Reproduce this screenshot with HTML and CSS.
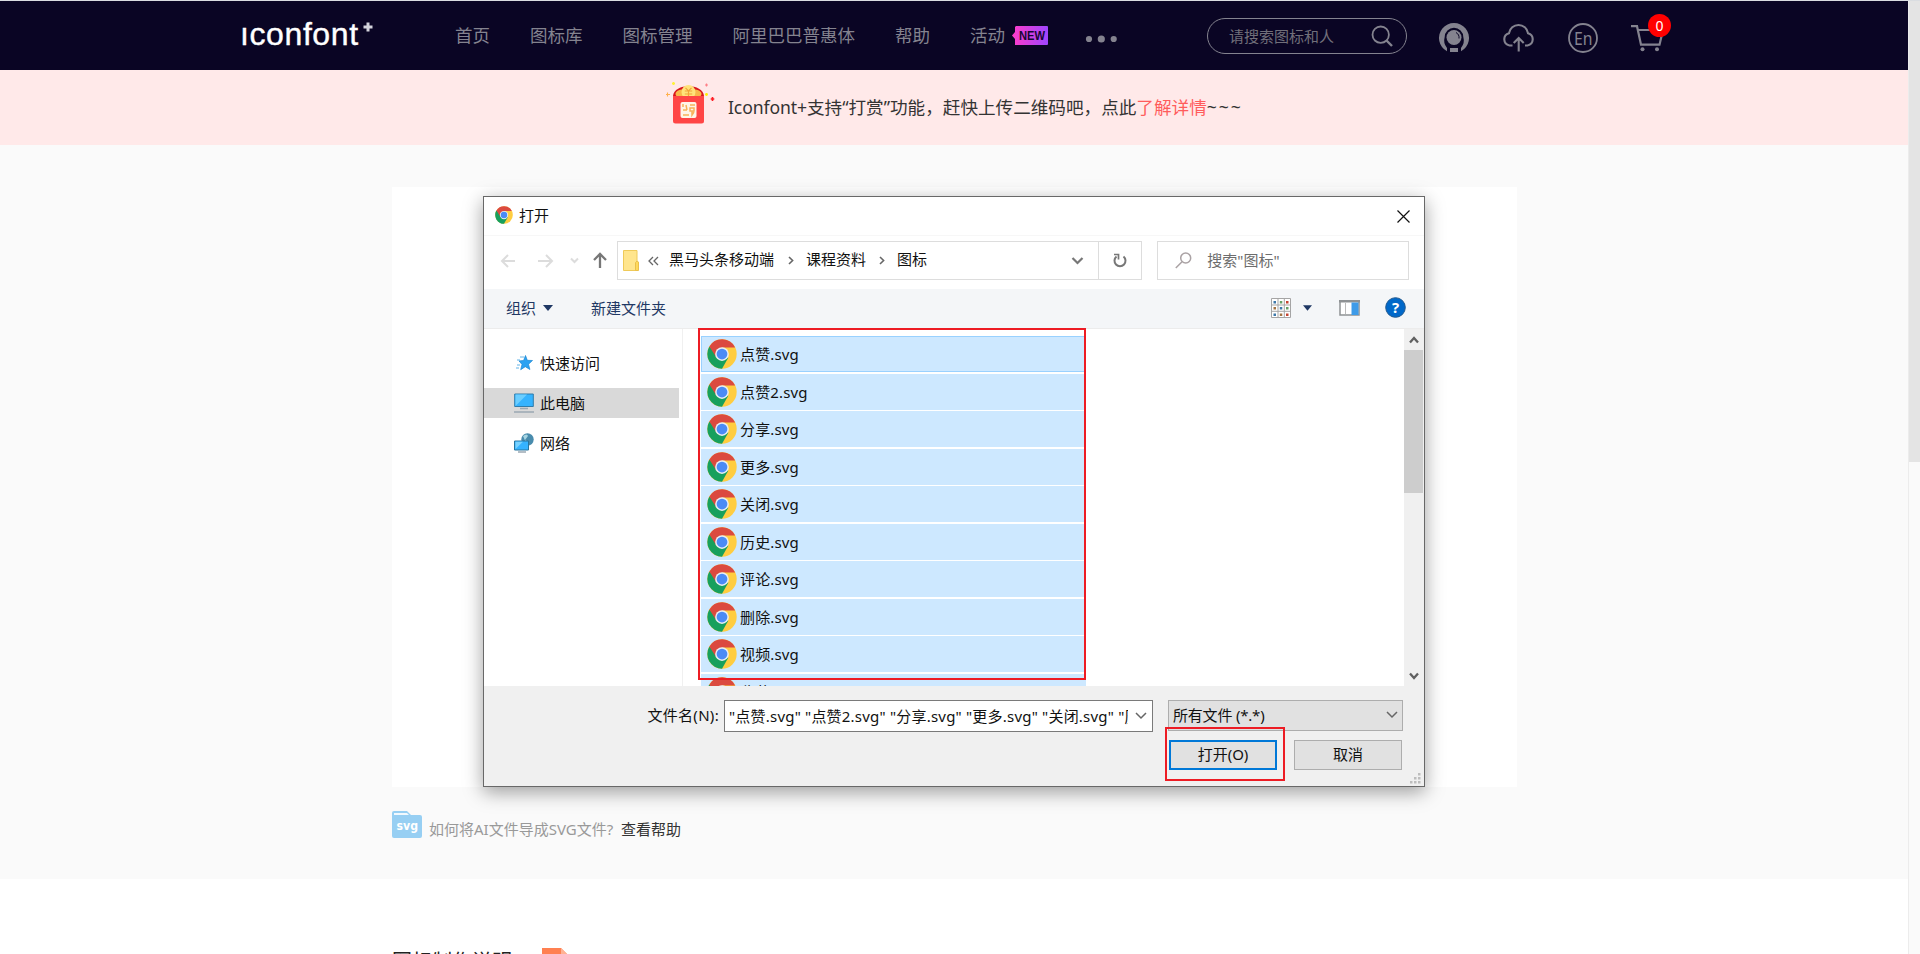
FILE: index.html
```html
<!DOCTYPE html>
<html lang="zh-CN">
<head>
<meta charset="utf-8">
<title>Iconfont+</title>
<link rel="stylesheet" href="styles.css">
</head>
<body>
<svg class="defs" aria-hidden="true">
  <symbol id="chrome" viewBox="0 0 48 48">
    <circle cx="24" cy="24" r="23.5" fill="#ffcd40"/>
    <path d="M24 24 L3.6 12.3 A23.5 23.5 0 0 0 24 47.5 L34 30z" fill="#17a05d"/>
    <path d="M24 13.5 H45 A23.5 23.5 0 0 0 3.8 12 L15 29.5z" fill="#db4a3f"/>
    <circle cx="24" cy="24" r="11" fill="#eaeef2"/>
    <circle cx="24" cy="24" r="8.6" fill="#4b8bf5"/>
  </symbol>
</svg>
<div class="page">
  <div class="main">
    <header class="header">
      <div class="logo"><span class="logo-text">ıconfont</span><svg width="10" height="10" viewBox="0 0 10 10"><path d="M5 .5v9M.5 5h9" stroke="#d4d4dc" stroke-width="3"/></svg></div>
      <nav class="nav">
        <a>首页</a><a>图标库</a><a>图标管理</a><a>阿里巴巴普惠体</a><a>帮助</a>
        <a class="activity">活动<svg width="36" height="19" viewBox="0 0 36 19"><defs><linearGradient id="ng"><stop stop-color="#ff3cc8"/><stop offset="1" stop-color="#9f45ff"/></linearGradient></defs><path d="M4 0H35a1 1 0 0 1 1 1V18a1 1 0 0 1-1 1H3V13L0 9.5 3 6V1z" fill="url(#ng)"/><text class="new-text" x="7" y="14" textLength="26" lengthAdjust="spacingAndGlyphs">NEW</text></svg></a>
        <svg class="dots" width="32" height="8" viewBox="0 0 32 8"><g fill="#84838f"><circle cx="4" cy="4" r="3.1"/><circle cx="16.3" cy="4" r="3.6"/><circle cx="28.7" cy="4" r="3.1"/></g></svg>
      </nav>
      <div class="search"><span>请搜索图标和人</span><svg width="22" height="22" viewBox="0 0 22 22" fill="none" stroke="#84838f" stroke-width="1.8"><circle cx="9.7" cy="9.7" r="8.2"/><path d="M15.5 15.5L21 21" stroke-width="2.4"/></svg></div>
      <div class="tools">
        <svg width="30" height="31" viewBox="0 0 30 31"><path d="M8 29.2V26A12 12 0 0 1 5.7 15a9.3 9.3 0 0 1 18.6 0A12 12 0 0 1 22 26v3.2A15 15 0 1 0 8 29.2z" fill="#84838f"/><path d="M6 17A9 10 0 0 1 24 17Q23 22 20 24H10Q7 22 6 17z" fill="#0a0524"/><circle cx="15" cy="15.500" r="7.500" fill="#84838f"/><path d="M11 26h8v4h-8z" fill="#84838f"/><path d="M17 10.500a6 6 0 0 1 3 6" fill="none" stroke="#0a0524"/></svg>
        <svg width="33" height="28" viewBox="0 0 33 28" fill="none" stroke="#84838f" stroke-width="2.1"><path d="M10.5 21.5H7.5A6.3 6.3 0 0 1 7 9.2 9.6 9.6 0 0 1 26 9.2 6.3 6.3 0 0 1 25.5 21.5H23"/><path d="M16.7 27.5V14.5M11.7 19l5-5 5 5"/></svg>
        <svg width="30" height="30" viewBox="0 0 30 30"><circle cx="15" cy="15" r="14" fill="none" stroke="#84838f" stroke-width="1.8"/><text class="en-text" x="6" y="21.500" textLength="18.500" lengthAdjust="spacingAndGlyphs">En</text></svg>
        <div class="cart"><svg width="33" height="28" viewBox="0 0 33 28" fill="none" stroke="#84838f" stroke-width="2.2"><path d="M0 2.2h6l4 18.5h18.5L32 6H7"/><g fill="#84838f" stroke="none"><circle cx="11.5" cy="25.3" r="2"/><circle cx="26" cy="25.3" r="2"/></g></svg><span class="badge">0</span></div>
      </div>
    </header>
    <div class="notice">
      <svg width="50" height="44" viewBox="0 0 50 44"><path d="M7 14C8 1 37 1 38 14z" fill="#d9151c"/><ellipse cx="22.5" cy="12" rx="13" ry="5.5" fill="#f8b84b"/><circle cx="22.5" cy="10" r="7" fill="#ffe37a"/><path d="M19.5 5.8l3 3 3-3M18.8 9h7.4M18.8 12h7.4M22.5 9v6" stroke="#f2a53a" stroke-width="1.2" fill="none"/><path d="M7 14H38V39a2.500 2.500 0 0 1-2.500 2.500h-26A2.500 2.500 0 0 1 7 39z" fill="#ff4545"/><rect x="14.500" y="20" width="16" height="16" rx="2" fill="#fff5e8"/><path d="M17 22v3M20 23l1 5M17 28h4M17 33h6M24 23h5M24 26h4v3h-4zM26 29v4l2-3" stroke="#f8b25a" stroke-width="1.500" fill="none"/><path d="M7.500 0v3M6 1.500h3" stroke="#fff23a" stroke-width="1.600"/><path d="M1.500 10.500v4M0 12.500h4" stroke="#ffb14d" stroke-width="1.100"/><path d="M40.500 1.500v3M39 3h3" stroke="#ff7f87" stroke-width="1.200"/><circle cx="40.500" cy="12.500" r="1.400" fill="#ffed00"/><path d="M46.500 15v4M44.700 17h3.600" stroke="#ff1c24" stroke-width="1.600"/></svg>
      <p><span class="lat">Iconfont+</span>支持“打赏”功能，赶快上传二维码吧，点此<a>了解详情</a><span class="tilde">~~~</span></p>
    </div>
    <section class="upload">
      <div class="stage">
        <div class="dialog">
          <div class="titlebar"><svg width="18" height="18"><use href="#chrome"/></svg><span>打开</span><svg class="close" width="13" height="13" viewBox="0 0 13 13" stroke="#111" stroke-width="1.200"><path d="M.5 .5l12 12M12.500 .5l-12 12"/></svg></div>
          <div class="location">
            <svg class="arrows" width="110" height="20" viewBox="0 0 110 20" fill="none"><g stroke="#dcdcdc" stroke-width="2"><path d="M15 11H2M8 5l-6 6 6 6M38 11h13M46 5l6 6-6 6"/><path d="M71 8.500l3.500 3.500 3.500-3.500"/></g><path d="M100 18V4M94 10l6-6 6 6" stroke="#777" stroke-width="2.300"/></svg>
            <div class="address">
              <svg width="16" height="21" viewBox="0 0 16 21"><path d="M.5 .5h13.500v20H.5z" fill="#ffe58d" stroke="#efca59"/><path d="M12.500 12.500l1.500-1.500 1.500 1v8.500h-3z" fill="#ffd95c" stroke="#eac04b"/></svg>
              <svg class="laquo" width="11" height="10" viewBox="0 0 11 10" fill="none" stroke="#666" stroke-width="1.300"><path d="M5 1L1 5l4 4M10 1L6 5l4 4"/></svg>
              <span class="crumb c1">黑马头条移动端</span><svg width="6" height="9" viewBox="0 0 6 9" fill="none" stroke="#666" stroke-width="1.600"><path d="M1 1l3.600 3.500L1 8"/></svg><span class="crumb c2">课程资料</span><svg width="6" height="9" viewBox="0 0 6 9" fill="none" stroke="#666" stroke-width="1.600"><path d="M1 1l3.600 3.500L1 8"/></svg><span class="crumb c3">图标</span>
              <svg class="down" width="13" height="8" viewBox="0 0 13 8" fill="none" stroke="#777" stroke-width="2.200"><path d="M1.500 1l5 5 5-5"/></svg>
              <div class="refresh"><svg width="14" height="15" viewBox="0 0 14 15" fill="none" stroke="#777" stroke-width="2"><path d="M10.500 3.500A5.500 5.500 0 1 1 3.500 3.500"/><path d="M1 1.500h4.500V6.500" stroke-width="1.700"/></svg></div>
            </div>
            <div class="find"><svg width="17" height="17" viewBox="0 0 17 17" fill="none" stroke="#aaa2a4" stroke-width="1.500"><circle cx="10.700" cy="6" r="5"/><path d="M7 9.800L.8 16"/></svg><span>搜索"图标"</span></div>
          </div>
          <div class="toolbar">
            <span>组织</span><svg class="tri" width="10" height="6" viewBox="0 0 10 6"><path d="M0 0h10L5 6z" fill="#1f3864"/></svg><span class="newdir">新建文件夹</span>
            <svg class="grid" width="20" height="20" viewBox="0 0 20 20"><path d="M.5 .5h19v19H.5zM7 0v20M13.300 0v20M0 7h20M0 13.300h20" fill="#fff" stroke="#a5a5a5"/><path d="M2.500 3h2.500v2.500H2.500zM8.800 9h2.500v2.500H8.800zM2.500 15.500h2.500V18H2.500z" fill="#3d78a9"/><path d="M8.800 3h2.500v2.500H8.800zM15 9h2.500v2.500H15z" fill="#67a067"/><path d="M15 3h2.500v2.500H15zM15 15.500h2.500V18H15z" fill="#c44431"/><path d="M2.500 9h2.500v2.500H2.500zM8.800 15.500h2.500V18H8.800z" fill="#a37443"/></svg>
            <svg class="tri2" width="9" height="6" viewBox="0 0 10 6"><path d="M0 0h10L5 6z" fill="#1f3864"/></svg>
            <svg class="pane" width="21" height="16" viewBox="0 0 21 16"><path d="M1 1h19v14H1z" fill="#fff" stroke="#8e9294" stroke-width="1.500"/><path d="M0 0h21v2.500H0z" fill="#8e9294"/><path d="M6.500 3v11" stroke="#bbb"/><path d="M12.500 2.500H19.500V15h-7z" fill="#3e9be8"/></svg>
            <svg class="help" width="21" height="21" viewBox="0 0 21 21"><circle cx="10.500" cy="10.500" r="9.800" fill="#0068c9" stroke="#22598f"/><text x="10.500" y="16" text-anchor="middle" class="q">?</text></svg>
          </div>
          <div class="body">
            <aside class="side">
              <div class="place"><svg width="20" height="20" viewBox="0 0 20 20"><path d="M11.500 2.500l1.800 4.800 5.200.2-4 3.700 1.400 5.300-4.600-2.800-4.600 3 1.300-5.300-3-3.500 4.600-.4z" fill="#2ba2f2" stroke="#1b86d2" stroke-width=".7"/><path d="M6 4h4M3 7h3M3 12h3M2 15h3" stroke="#62b4e8"/></svg>快速访问</div>
              <div class="place on"><svg width="20" height="20" viewBox="0 0 20 20"><path d="M.7 1h18.600v12.500H.7z" fill="#35b3ff" stroke="#317ca9"/><path d="M1.500 13L13 1.500H1.500z" fill="#6bceff"/><path d="M6 15.500h8M0 19h20" stroke="#9ba8b3" stroke-width="1.600"/></svg>此电脑</div>
              <div class="place"><svg width="20" height="20" viewBox="0 0 20 20"><circle cx="13.500" cy="6.500" r="6.200" fill="#498cad"/><path d="M9 3q4-3 5 0l-3 4q4 1 2 5z" fill="#a7d5e2"/><path d="M.5 8h14v9H.5z" fill="#35b3ff" stroke="#28759e"/><path d="M1.500 16L9 8.700H1.500z" fill="#78d2ff"/><path d="M4 19h8" stroke="#9ba8b3" stroke-width="1.500"/></svg>网络</div>
            </aside>
            <div class="files">
              <div class="file first"><svg width="30" height="30"><use href="#chrome"/></svg>点赞.svg</div>
              <div class="file"><svg width="30" height="30"><use href="#chrome"/></svg>点赞2.svg</div>
              <div class="file"><svg width="30" height="30"><use href="#chrome"/></svg>分享.svg</div>
              <div class="file"><svg width="30" height="30"><use href="#chrome"/></svg>更多.svg</div>
              <div class="file"><svg width="30" height="30"><use href="#chrome"/></svg>关闭.svg</div>
              <div class="file"><svg width="30" height="30"><use href="#chrome"/></svg>历史.svg</div>
              <div class="file"><svg width="30" height="30"><use href="#chrome"/></svg>评论.svg</div>
              <div class="file"><svg width="30" height="30"><use href="#chrome"/></svg>删除.svg</div>
              <div class="file"><svg width="30" height="30"><use href="#chrome"/></svg>视频.svg</div>
              <div class="file"><svg width="30" height="30"><use href="#chrome"/></svg>收藏.svg</div>
            </div>
            <div class="bar"><svg width="10" height="8" viewBox="0 0 10 8" fill="none" stroke="#606060" stroke-width="2.300"><path d="M1 6.500L5 2l4 4.500"/></svg><div class="thumb"></div><svg width="10" height="8" viewBox="0 0 10 8" fill="none" stroke="#606060" stroke-width="2.300"><path d="M1 1.500L5 6l4-4.500"/></svg></div>
          </div>
          <div class="footer">
            <div class="frow">
              <label>文件名(N):</label>
              <div class="names"><span>"点赞.svg" "点赞2.svg" "分享.svg" "更多.svg" "关闭.svg" "历史.svg"</span><svg width="12" height="8" viewBox="0 0 12 8" fill="none" stroke="#666" stroke-width="1.500"><path d="M1 1l5 5 5-5"/></svg></div>
              <div class="types"><span>所有文件 (*.*)</span><svg width="12" height="8" viewBox="0 0 12 8" fill="none" stroke="#666" stroke-width="1.500"><path d="M1 1l5 5 5-5"/></svg></div>
            </div>
            <div class="buttons"><div class="btn primary">打开(O)</div><div class="btn">取消</div></div>
          </div>
          <svg class="grip" width="11" height="11" viewBox="0 0 11 11" fill="#bdbdbd"><path d="M8 0h2.500v2.500H8zM8 4h2.500v2.500H8zM4 4h2.500v2.500H4zM8 8h2.500v2.500H8zM4 8h2.500v2.500H4zM0 8h2.500v2.500H0z"/></svg>
          <div class="mark mark-files"></div>
          <div class="mark mark-open"></div>
        </div>
      </div>
      <div class="tip"><svg width="30" height="27" viewBox="0 0 30 27"><path d="M0 2Q0 0 2 0H15l4 4H28q2 0 2 2V25q0 2-2 2H2q-2 0-2-2z" fill="#97cff3"/><path d="M2 2h13l2 2H2z" fill="#f2f9fe"/><text class="svg-text" x="4.500" y="18.500" textLength="21.500" lengthAdjust="spacingAndGlyphs">svg</text></svg><span class="ask">如何将AI文件导成SVG文件?</span><a>查看帮助</a></div>
    </section>
    <section class="guide"><h2>图标制作说明</h2><svg width="27" height="30" viewBox="0 0 27 30"><path d="M1 0H20l7 7v23H1z" fill="#ff8051"/><path d="M20 0l7 7h-7z" fill="#ffb294"/></svg></section>
  </div>
  <div class="scrollbar"><div class="scroll-thumb"></div></div>
</div>
</body>
</html>
```
FILE: styles.css
```css
* { box-sizing: border-box; }
body { margin: 0; height: 954px; overflow: hidden; background: #fff; font-family: "Noto Sans", "Noto Sans CJK SC", sans-serif; font-size: 15px; color: #222; }
svg { display: block; flex: none; overflow: visible; }
.defs { position: absolute; width: 0; height: 0; }
.page { display: flex; height: 954px; border-top: 1px solid #dadde1; }
.main { width: 1908px; overflow: hidden; white-space: nowrap; }
.scrollbar { width: 12px; background: #fafafa; border-left: 1px solid #ececec; }
.scroll-thumb { height: 461px; background: #e4e4e4; }

.header { height: 69px; background: #0a0524; color: #84838f; display: flex; align-items: center; padding-left: 240px; }
.logo { width: 215px; display: flex; align-items: flex-start; gap: 6px; color: #fff; }
.logo-text { font-family: "Liberation Sans", Arial, sans-serif; font-size: 32px; line-height: 32px; width: 117px; -webkit-text-stroke: .4px #fff; margin-top: -4px; letter-spacing: .6px; }
.nav { width: 752px; display: flex; align-items: center; gap: 40px; font-size: 17.500px; line-height: 26px; margin-top: -1px; }
.activity { display: flex; align-items: center; gap: 7px; }
.new-text { font: bold 12px "Liberation Sans", sans-serif; fill: #160634; }
.dots { margin-top: 7px; margin-left: -3px; }
.search { width: 200px; height: 36px; border: 1px solid #84838f; border-radius: 18px; display: flex; align-items: center; justify-content: space-between; padding: 0 13px 0 21px; }
.search span { color: #716f7a; }
.tools { display: flex; align-items: center; margin-left: 32px; margin-top: 4px; gap: 33px; }
.en-text { font-size: 17.500px; fill: #84838f; }
.cart { position: relative; }
.badge { position: absolute; left: 17px; top: -10px; width: 23px; height: 23px; border-radius: 50%; background: #f00; color: #fff; font-size: 14px; line-height: 23px; text-align: center; }

.notice { height: 75px; background: #ffe9e9; display: flex; padding: 12px 0 0 666px; gap: 12px; }
.notice p { margin: 12px 0 0; font-size: 17.600px; line-height: 26px; color: #333; }
.lat { letter-spacing: -.1px; }
.notice a { color: #ff5c5c; }
.tilde { letter-spacing: 2px; }

.upload { height: 734px; background: #fafafa; padding: 42px 391px 0 392px; }
.stage { width: 1125px; height: 600px; background: #fff; padding: 9px 92px 0 91px; }
.dialog { position: relative; width: 942px; height: 591px; border: 1px solid #686868; background: #fff; box-shadow: 0 5px 18px rgba(0,0,0,.38); color: #111; line-height: 22px; }
.titlebar { height: 39px; border-bottom: 1px solid #f7f7f7; display: flex; align-items: center; padding: 0 14px 2px 11px; }
.titlebar span { margin-left: 6px; }
.close { margin-left: auto; margin-top: 2px; }
.location { height: 53px; display: flex; padding: 5px 15px 0 16px; }
.arrows { margin: 9px 7px 0 0; }
.address { width: 526px; height: 39px; border: 1px solid #ddd; display: flex; align-items: center; padding-left: 5px; }
.laquo { margin-left: 9px; }
.crumb { line-height: 20px; padding-bottom: 3px; }
.c1 { margin-left: 10px; width: 119px; }
.c2 { margin-left: 12px; width: 73px; }
.c3 { margin-left: 12px; }
.down { margin-left: auto; margin-right: 14px; }
.refresh { width: 43px; height: 37px; border-left: 1px solid #ddd; display: flex; align-items: center; justify-content: center; }
.find { margin-left: 15px; width: 252px; height: 39px; border: 1px solid #ddd; display: flex; align-items: center; padding: 0 0 1px 17px; gap: 15px; color: #6d6d6d; }
.toolbar { height: 40px; background: #f4f6f8; border-bottom: 1px solid #ececec; display: flex; align-items: center; padding: 0 18px 2px 22px; color: #1f3864; }
.tri { margin-left: 7px; }
.newdir { margin-left: 38px; }
.grid { margin-left: auto; }
.tri2 { margin-left: 12px; }
.pane { margin-left: 27px; }
.help { margin-left: 25px; }
.q { font: bold 15px "Noto Sans", sans-serif; fill: #fff; }
.body { height: 357px; display: flex; overflow: hidden; }
.side { width: 199px; border-right: 1px solid #f0f0f0; padding-top: 19px; }
.place { width: 195px; height: 30px; margin-bottom: 10px; display: flex; align-items: center; gap: 6px; padding-left: 30px; }
.place.on { background: #d9d9d9; }
.files { width: 721px; padding: 7px 0 0 18px; }
.file { width: 385px; height: 36px; margin-bottom: 1.500px; background: #cde8ff; display: flex; align-items: center; gap: 3px; padding-left: 6px; letter-spacing: .15px; }
.file.first { border: 1px solid #99d1ff; padding-left: 5px; }
.bar { width: 20px; background: #f0f0f0; display: flex; flex-direction: column; align-items: center; padding: 7px 1px 6px 0; }
.thumb { width: 19px; height: 143px; background: #cdcdcd; margin: 6px 0 auto; }
.footer { height: 100px; background: #f0f0f0; padding-top: 14px; }
.frow { display: flex; }
.frow label { width: 240px; padding: 4px 5px 0 0; text-align: right; letter-spacing: .3px; }
.names { width: 429px; height: 32px; background: #fff; border: 1px solid #7a7a7a; display: flex; align-items: center; padding: 0 5px 0 4px; }
.names span { width: 399px; overflow: hidden; margin-right: 7px; letter-spacing: .21px; }
.types { margin-left: 15px; width: 235px; height: 31px; background: #e1e1e1; border: 1px solid #adadad; display: flex; align-items: center; justify-content: space-between; padding: 0 4px 1px; }
.types span { letter-spacing: -.2px; }
.buttons { display: flex; gap: 17px; margin: 8px 0 0 685px; }
.btn { width: 108px; height: 30px; background: #e1e1e1; border: 1px solid #adadad; display: flex; align-items: center; justify-content: center; padding-bottom: 2px; }
.btn.primary { border: 2px solid #0078d7; }
.grip { position: absolute; right: 3px; bottom: 2px; }
.mark { position: absolute; border: 2px solid #ed1c24; }
.mark-files { left: 214px; top: 131px; width: 388px; height: 352px; }
.mark-open { left: 681px; top: 530px; width: 120px; height: 54px; }
.tip { display: flex; align-items: flex-start; margin-top: 24px; }
.tip span, .tip a { margin-top: 7px; line-height: 22px; }
.svg-text { font: bold 12px "DejaVu Sans", sans-serif; fill: #fff; }
.ask { margin-left: 7px; width: 192px; color: #999; }
.tip a { color: #333; }
.guide { display: flex; padding: 69px 0 0 392px; }
.guide h2 { margin: 0; width: 149px; font-size: 20px; line-height: 28px; font-weight: 400; color: #222; }
```
